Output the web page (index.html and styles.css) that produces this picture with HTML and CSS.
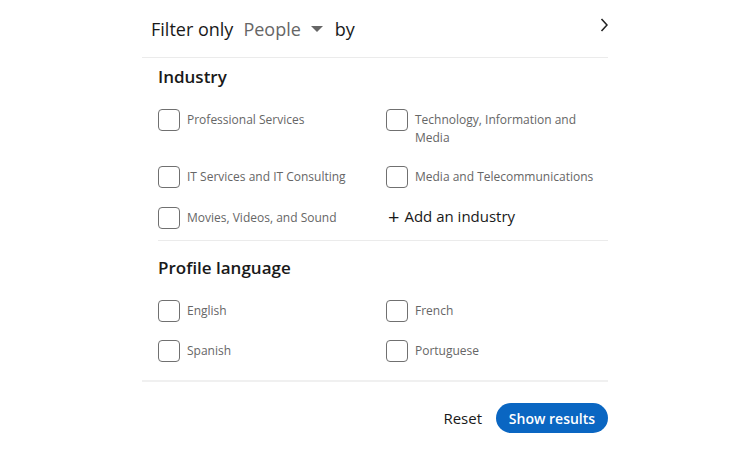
FILE: index.html
```html
<!DOCTYPE html>
<html>

<head>
    <title>All filters</title>
    <link rel="stylesheet" href="styles.css">
</head>

<body>
    <div class="panel">
        <div class="header">
            <span class="title">Filter only</span>
            <span class="picker">People
                <svg class="caret" width="14" height="8" viewBox="0 0 14 8"><path d="M1 1h12L7 7z" fill="#666"/></svg>
            </span>
            <span class="title">by</span>
            <svg class="chevron" width="8" height="14" viewBox="0 0 8 14"><path d="M1.5 1l5.5 6-5.5 6" fill="none" stroke="#222" stroke-width="1.6"/></svg>
        </div>

        <div class="section">
            <h3>Industry</h3>
            <div class="options">
                <label class="option"><span class="box"></span><span class="text">Professional Services</span></label>
                <label class="option"><span class="box"></span><span class="text">Technology, Information and Media</span></label>
                <label class="option"><span class="box"></span><span class="text">IT Services and IT Consulting</span></label>
                <label class="option"><span class="box"></span><span class="text">Media and Telecommunications</span></label>
                <label class="option"><span class="box"></span><span class="text">Movies, Videos, and Sound</span></label>
                <div class="add"><span class="plus">+</span> Add an industry</div>
            </div>
        </div>

        <div class="section last">
            <h3>Profile language</h3>
            <div class="options">
                <label class="option"><span class="box"></span><span class="text">English</span></label>
                <label class="option"><span class="box"></span><span class="text">French</span></label>
                <label class="option"><span class="box"></span><span class="text">Spanish</span></label>
                <label class="option"><span class="box"></span><span class="text">Portuguese</span></label>
            </div>
        </div>

        <div class="footer">
            <button class="reset">Reset</button>
            <button class="show">Show results</button>
        </div>
    </div>
</body>

</html>
```

FILE: styles.css
```css
body {
    margin: 0;
    background: #fff;
    font-family: "Open Sans", "Noto Sans", sans-serif;
    color: #191919;
}

.panel {
    width: 466px;
    margin-left: 142px;
    overflow: hidden;
}

.header {
    height: 57px;
    padding-left: 9px;
    display: flex;
    align-items: center;
    border-bottom: 1px solid #ebebeb;
    position: relative;
}

.title {
    font-size: 18px;
    font-weight: 500;
    color: #191919;
}

.picker {
    font-size: 18px;
    color: #666;
    margin: 0 11px 0 10px;
    display: flex;
    align-items: center;
}

.caret {
    margin-left: 9px;
}

.chevron {
    position: absolute;
    right: 0;
    top: 18px;
}

.section {
    margin-left: 16px;
    padding: 7px 0 11px;
    border-bottom: 1px solid #ebebeb;
}

.section.last {
    margin-left: 0;
    padding-left: 16px;
    padding-top: 15px;
    padding-bottom: 18px;
    border-bottom: 2px solid #f0f0f0;
}

h3 {
    margin: 0 0 20px;
    font-size: 17px;
    line-height: 24px;
    font-weight: 600;
}

.section.last h3 {
    margin-bottom: 20px;
}

.options {
    display: grid;
    grid-template-columns: 228px 1fr;
    row-gap: 19px;
}

.section.last .options {
    row-gap: 18px;
}

.option {
    display: flex;
    align-items: flex-start;
    gap: 7px;
}

.box {
    flex: none;
    width: 20px;
    height: 20px;
    border: 1px solid #707070;
    border-radius: 4px;
}

.text {
    font-size: 12px;
    line-height: 18px;
    padding-top: 2px;
    color: #666;
    padding-right: 14px;
}

.add {
    font-size: 15px;
    font-weight: 500;
    color: #191919;
    display: flex;
    align-items: center;
    height: 18px;
    padding-left: 2px;
}

.plus {
    font-size: 20px;
    font-weight: 400;
    margin-right: 5px;
}

.footer {
    display: flex;
    justify-content: flex-end;
    align-items: center;
    padding-top: 21px;
    gap: 14px;
}

.reset {
    border: none;
    background: none;
    font-family: inherit;
    font-size: 15px;
    color: #191919;
    padding: 0;
    cursor: pointer;
}

.show {
    border: none;
    background: #0a66c2;
    color: #fff;
    font-family: inherit;
    font-size: 14px;
    font-weight: 600;
    height: 30px;
    width: 112px;
    border-radius: 15px;
    cursor: pointer;
}
```
